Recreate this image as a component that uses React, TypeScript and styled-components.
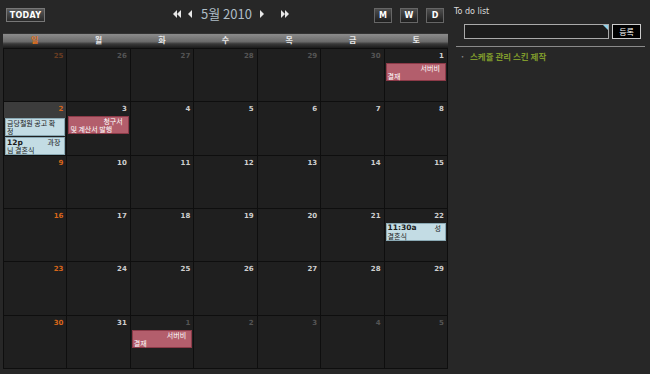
import React from "react";
import styled, { createGlobalStyle } from "styled-components";

const Global = createGlobalStyle`
  html, body { margin: 0; padding: 0; background: #262626; }
  body { font-family: "Noto Sans CJK KR", "DejaVu Sans", sans-serif; width: 650px; height: 374px; overflow: hidden; }
`;

const Page = styled.div`
  display: flex;
  width: 650px;
  height: 374px;
  background: #272727;
`;

const CalendarArea = styled.div`
  width: 449px;
  padding-left: 3px;
  box-sizing: border-box;
  display: flex;
  flex-direction: column;
`;

const Toolbar = styled.div`
  height: 33px;
  display: flex;
  align-items: flex-start;
`;

const TodayBtn = styled.div`
  margin: 8px 0 0 3px;
  width: 37px;
  height: 12px;
  border: 1px solid #777;
  background: linear-gradient(#5a5a5a, #2a2a2a);
  color: #fff;
  font: bold 8px "DejaVu Sans", sans-serif;
  display: flex;
  align-items: center;
  justify-content: center;
  letter-spacing: 0.3px;
`;

const MonthNav = styled.div`
  margin-left: 128px;
  margin-top: 5px;
  display: flex;
  align-items: center;
  gap: 6px;
`;

const NavIcon = styled.svg`
  display: block;
`;

const NavGap = styled.span`
  width: 4px;
`;

const MonthText = styled.span`
  font-family: "Noto Sans CJK KR", sans-serif;
  font-size: 13px;
  line-height: 18px;
  color: #aebdc6;
  margin: 0 2px;
`;

const ViewBtns = styled.div`
  margin-left: auto;
  margin-right: 5px;
  margin-top: 8px;
  display: flex;
  gap: 8px;
`;

const ViewBtn = styled.div`
  width: 16px;
  height: 13px;
  border: 1px solid #666;
  background: linear-gradient(#4e4e4e, #1e1e1e);
  color: #fff;
  font: bold 8px "DejaVu Sans", sans-serif;
  display: flex;
  align-items: center;
  justify-content: center;
`;

const DayHeader = styled.div`
  height: 15px;
  display: grid;
  grid-template-columns: repeat(7, 1fr);
  background: linear-gradient(#8c8c8c 0%, #6a6a6a 55%, #3a3a3a 70%, #1a1a1a 100%);
  border-top: 1px solid #333;
  box-sizing: border-box;
  width: 445px;
`;

const DayName = styled.div<{ $sun?: boolean }>`
  text-align: center;
  font-size: 8px;
  line-height: 9px;
  font-weight: bold;
  padding-top: 1px;
  color: ${(p) => (p.$sun ? "#e0701a" : "#e8e8e8")};
`;

const Grid = styled.div`
  display: grid;
  grid-template-columns: repeat(7, 1fr);
  grid-template-rows: repeat(6, 1fr);
  height: 321px;
  gap: 1px;
  padding: 1px;
  background: #0e0e0e;
  width: 445px;
  box-sizing: border-box;
`;

const Cell = styled.div`
  background: #1f1f1f;
  display: flex;
  flex-direction: column;
  min-height: 0;
`;

const DateRow = styled.div<{ $today?: boolean; $color: string }>`
  height: ${(p) => (p.$today ? "16px" : "14px")};
  flex-shrink: 0;
  background: ${(p) => (p.$today ? "#3c3c3c" : "transparent")};
  text-align: right;
  padding: 3px 3px 0 0;
  box-sizing: border-box;
  font: bold 7px "DejaVu Sans", sans-serif;
  color: ${(p) => p.$color};
`;

const Event = styled.div<{ $kind: "blue" | "pink" }>`
  margin: 0 1px 1px 1px;
  padding: 0 1px;
  height: 18px;
  flex-shrink: 0;
  box-sizing: border-box;
  font-size: 7px;
  background: ${(p) => (p.$kind === "blue" ? "#c3dce4" : "#b35e6c")};
  color: ${(p) => (p.$kind === "blue" ? "#1a1a1a" : "#fff")};
  border: 1px solid ${(p) => (p.$kind === "blue" ? "#8aa9b4" : "#8c3a48")};
`;

const EvLine = styled.div<{ $indent?: number }>`
  display: flex;
  align-items: center;
  height: 8px;
  line-height: 8px;
  white-space: nowrap;
  padding-left: ${(p) => p.$indent ?? 0}px;
`;

const EvTime = styled.span`
  font: bold 7.5px "DejaVu Sans", sans-serif;
`;

const EvRight = styled.span`
  margin-left: auto;
  padding-right: 3px;
`;

const Side = styled.div`
  flex: 1;
  padding: 7px 5px 0 5px;
  box-sizing: border-box;
`;

const SideTitle = styled.div`
  font: 8px "DejaVu Sans", sans-serif;
  color: #ddd;
  height: 17px;
`;

const InputRow = styled.div`
  display: flex;
  gap: 3px;
  padding-left: 10px;
`;

const TodoInput = styled.div`
  position: relative;
  width: 145px;
  height: 15px;
  border: 1px solid #aaa;
  background: #1c1c1c;
  box-sizing: border-box;
`;

const Corner = styled.div`
  position: absolute;
  right: 0;
  top: 0;
  width: 0;
  height: 0;
  border-top: 5px solid #8fd0e8;
  border-left: 5px solid transparent;
`;

const AddBtn = styled.div`
  width: 29px;
  height: 15px;
  border: 1px solid #ccc;
  background: #000;
  color: #fff;
  font-size: 8px;
  display: flex;
  align-items: center;
  justify-content: center;
  box-sizing: border-box;
`;

const Divider = styled.div`
  margin: 7px 0 0 2px;
  height: 1px;
  background: #8a8a8a;
`;

const TodoItem = styled.div`
  margin: 4px 0 0 6px;
  font-size: 8.5px;
  line-height: 10px;
  color: #7f9a2c;
  font-weight: bold;
  display: flex;
  gap: 5px;
`;

const Bullet = styled.span`
  color: #888;
`;

type Ev =
  | { kind: "pink"; first: string; second: string }
  | { kind: "blue"; time?: string; right?: string; first?: string; second: string };
type Day = { n: number; other?: boolean; today?: boolean; events?: Ev[] };

const weeks: Day[][] = [
  [{ n: 25, other: true }, { n: 26, other: true }, { n: 27, other: true }, { n: 28, other: true }, { n: 29, other: true }, { n: 30, other: true },
    { n: 1, events: [{ kind: "pink", first: "서버비", second: "결재" }] }],
  [{ n: 2, today: true, events: [
      { kind: "blue", first: "금당철원 공고 확", second: "정" },
      { kind: "blue", time: "12p", right: "과장", second: "님 결혼식" },
    ] },
    { n: 3, events: [{ kind: "pink", first: "청구서", second: "및 계산서 발행" }] },
    { n: 4 }, { n: 5 }, { n: 6 }, { n: 7 }, { n: 8 }],
  [{ n: 9 }, { n: 10 }, { n: 11 }, { n: 12 }, { n: 13 }, { n: 14 }, { n: 15 }],
  [{ n: 16 }, { n: 17 }, { n: 18 }, { n: 19 }, { n: 20 }, { n: 21 },
    { n: 22, events: [{ kind: "blue", time: "11:30a", right: "성", second: "결혼식" }] }],
  [{ n: 23 }, { n: 24 }, { n: 25 }, { n: 26 }, { n: 27 }, { n: 28 }, { n: 29 }],
  [{ n: 30 }, { n: 31 }, { n: 1, other: true, events: [{ kind: "pink", first: "서버비", second: "결재" }] },
    { n: 2, other: true }, { n: 3, other: true }, { n: 4, other: true }, { n: 5, other: true }],
];

const dayNames = ["일", "월", "화", "수", "목", "금", "토"];

const dateColor = (d: Day, col: number) => {
  if (col === 0) return d.other ? "#6a3d22" : "#d8661a";
  return d.other ? "#555" : "#cfcfcf";
};

const DoubleLeft = () => (
  <NavIcon width="9" height="8" viewBox="0 0 9 8">
    <path d="M4 0 L0 4 L4 8 Z M8 0 L4 4 L8 8 Z" fill="#e8e8e8" />
  </NavIcon>
);
const SingleLeft = () => (
  <NavIcon width="5" height="8" viewBox="0 0 5 8">
    <path d="M4 0 L0 4 L4 8 Z" fill="#e8e8e8" />
  </NavIcon>
);
const SingleRight = () => (
  <NavIcon width="5" height="8" viewBox="0 0 5 8">
    <path d="M0 0 L4 4 L0 8 Z" fill="#e8e8e8" />
  </NavIcon>
);
const DoubleRight = () => (
  <NavIcon width="9" height="8" viewBox="0 0 9 8">
    <path d="M0 0 L4 4 L0 8 Z M4 0 L8 4 L4 8 Z" fill="#e8e8e8" />
  </NavIcon>
);

const EventBox = ({ e }: { e: Ev }) => {
  if (e.kind === "pink") {
    return (
      <Event $kind="pink">
        <EvLine $indent={33}>{e.first}</EvLine>
        <EvLine>{e.second}</EvLine>
      </Event>
    );
  }
  return (
    <Event $kind="blue">
      <EvLine>
        {e.time && <EvTime>{e.time}</EvTime>}
        {e.first && <span>{e.first}</span>}
        {e.right && <EvRight>{e.right}</EvRight>}
      </EvLine>
      <EvLine>{e.second}</EvLine>
    </Event>
  );
};

export default function App() {
  return (
    <>
      <Global />
      <Page>
        <CalendarArea>
          <Toolbar>
            <TodayBtn>TODAY</TodayBtn>
            <MonthNav>
              <DoubleLeft />
              <SingleLeft />
              <MonthText>5월 2010</MonthText>
              <SingleRight />
              <NavGap />
              <DoubleRight />
            </MonthNav>
            <ViewBtns>
              <ViewBtn>M</ViewBtn>
              <ViewBtn>W</ViewBtn>
              <ViewBtn>D</ViewBtn>
            </ViewBtns>
          </Toolbar>
          <DayHeader>
            {dayNames.map((d, i) => (
              <DayName key={d} $sun={i === 0}>{d}</DayName>
            ))}
          </DayHeader>
          <Grid>
            {weeks.flatMap((w, wi) =>
              w.map((d, ci) => (
                <Cell key={`${wi}-${ci}`}>
                  <DateRow $today={d.today} $color={dateColor(d, ci)}>{d.n}</DateRow>
                  {d.events?.map((e, ei) => <EventBox key={ei} e={e} />)}
                </Cell>
              ))
            )}
          </Grid>
        </CalendarArea>
        <Side>
          <SideTitle>To do list</SideTitle>
          <InputRow>
            <TodoInput>
              <Corner />
            </TodoInput>
            <AddBtn>등록</AddBtn>
          </InputRow>
          <Divider />
          <TodoItem>
            <Bullet>·</Bullet>
            <span>스케쥴 관리 스킨 제작</span>
          </TodoItem>
        </Side>
      </Page>
    </>
  );
}
